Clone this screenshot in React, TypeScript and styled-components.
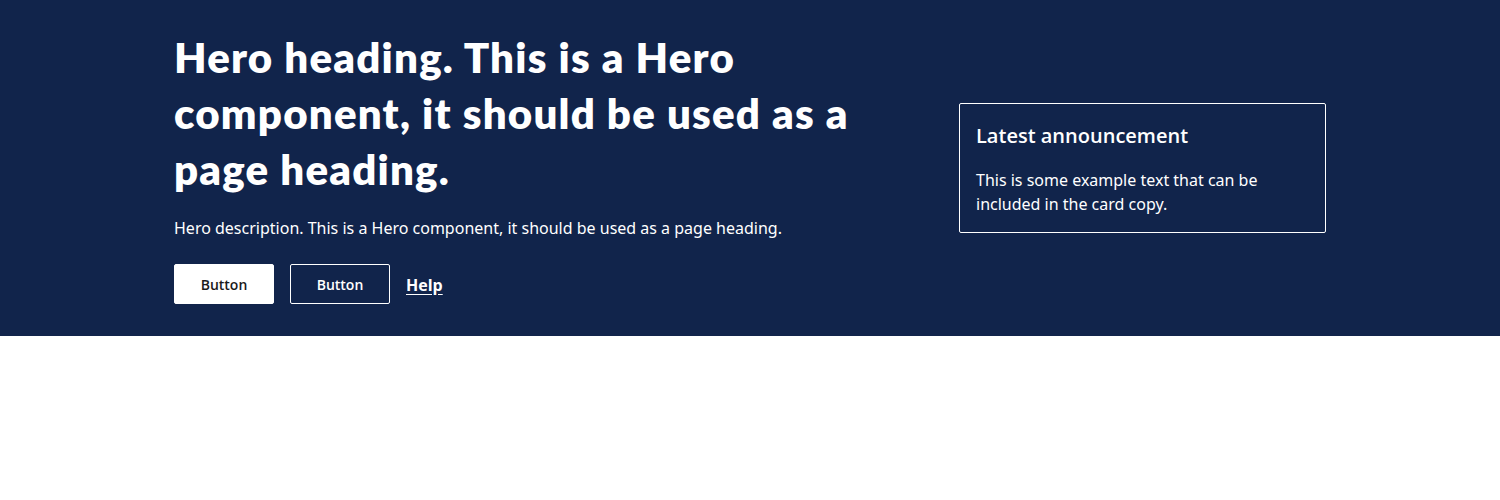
import React from "react";
import styled, { createGlobalStyle } from "styled-components";

const Global = createGlobalStyle`
  html, body { margin: 0; padding: 0; background: #ffffff; }
  body { font-family: "Noto Sans", "Open Sans", sans-serif; }
  * { box-sizing: border-box; }
`;

const Hero = styled.section`
  background: #11244b;
  color: #ffffff;
  padding: 29px 0 32px;
`;

const Container = styled.div`
  max-width: 1152px;
  margin: 0 auto;
  display: grid;
  grid-template-columns: repeat(12, 1fr);
  column-gap: 24px;
  align-items: center;
`;

const Main = styled.div`
  grid-column: span 8;
  display: flex;
  flex-direction: column;
`;

const Aside = styled.div`
  grid-column: span 4;
  padding-top: 2px;
`;

const Heading = styled.h1`
  margin: 0;
  font-family: "Lato", "Noto Sans", sans-serif;
  font-weight: 800;
  font-size: 42px;
  line-height: 56px;
  letter-spacing: 1.2px;
  max-width: 720px;
`;

const Description = styled.p`
  margin: 19px 0 0;
  font-size: 16px;
  line-height: 24px;
`;

const Actions = styled.div`
  margin-top: 24px;
  display: flex;
  align-items: center;
  gap: 16px;
`;

const Button = styled.button<{ $variant: "primary" | "secondary" }>`
  width: 100px;
  height: 40px;
  border-radius: 2px;
  border: 1px solid #ffffff;
  font-family: "Open Sans", sans-serif;
  font-weight: 600;
  font-size: 14px;
  cursor: pointer;
  background: ${(p) => (p.$variant === "primary" ? "#ffffff" : "transparent")};
  color: ${(p) => (p.$variant === "primary" ? "#1a1a1a" : "#ffffff")};
`;

const HelpLink = styled.a`
  color: #ffffff;
  font-family: "Open Sans", sans-serif;
  font-weight: 700;
  font-size: 16px;
  text-decoration: underline;
  text-underline-offset: 3px;
  margin-top: 1px;
`;

const Card = styled.div`
  border: 1px solid #ffffff;
  border-radius: 2px;
  padding: 16px;
  margin-left: 1px;
`;

const CardTitle = styled.h2`
  margin: 0;
  font-family: "Open Sans", sans-serif;
  font-size: 20px;
  font-weight: 600;
  line-height: 32px;
`;

const CardText = styled.p`
  margin: 16px 0 0;
  font-size: 16px;
  line-height: 24px;
`;

export default function App() {
  return (
    <>
      <Global />
      <Hero>
        <Container>
          <Main>
            <Heading>
              Hero heading. This is a Hero component, it should be used as a page heading.
            </Heading>
            <Description>
              Hero description. This is a Hero component, it should be used as a page heading.
            </Description>
            <Actions>
              <Button $variant="primary">Button</Button>
              <Button $variant="secondary">Button</Button>
              <HelpLink href="#">Help</HelpLink>
            </Actions>
          </Main>
          <Aside>
            <Card>
              <CardTitle>Latest announcement</CardTitle>
              <CardText>This is some example text that can be included in the card copy.</CardText>
            </Card>
          </Aside>
        </Container>
      </Hero>
    </>
  );
}
